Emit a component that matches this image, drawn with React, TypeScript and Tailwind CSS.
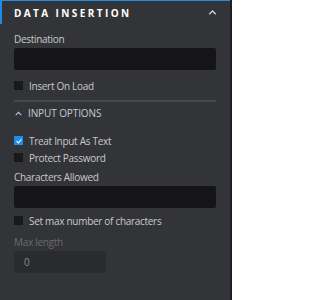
import React from "react";

function Check({ checked }: { checked?: boolean }) {
  return checked ? (
    <span className="flex h-[9px] w-[9px] shrink-0 items-center justify-center bg-[#1c8de8]">
      <svg viewBox="0 0 10 10" className="h-[8px] w-[8px]">
        <path d="M2 5.2 L4.2 7.3 L8 2.8" fill="none" stroke="white" strokeWidth="1.4" />
      </svg>
    </span>
  ) : (
    <span className="h-[9px] w-[9px] shrink-0 bg-[#19191b]" />
  );
}

function CheckRow({ label, checked }: { label: string; checked?: boolean }) {
  return (
    <div className="flex h-[17px] items-center gap-[6px]">
      <Check checked={checked} />
      <span className="text-[10px] leading-[14px] tracking-[-0.3px] text-[#c9c9c9]">{label}</span>
    </div>
  );
}

export default function App() {
  return (
    <div
      className="flex h-[300px] w-[232px] bg-[#333437]"
      style={{ fontFamily: '"Open Sans", "Noto Sans", sans-serif' }}
    >
      <div className="flex w-[230px] flex-col">
        <div className="h-px w-full bg-[#1c8de8]" />
        <div className="flex h-[23px] items-center justify-between border-l-2 border-[#1c8de8] pl-[12px] pr-[13px]">
          <span className="text-[10px] font-bold leading-[14px] tracking-[2.4px] text-white">DATA INSERTION</span>
          <svg viewBox="0 0 10 6" className="h-[5px] w-[9px]">
            <path d="M1 5 L5 1.2 L9 5" fill="none" stroke="#d0d0d0" strokeWidth="1.6" />
          </svg>
        </div>
        <div className="flex flex-col px-[14px] pt-[8px]">
          <span className="text-[10px] leading-[14px] tracking-[-0.3px] text-[#c9c9c9]">Destination</span>
          <div className="mt-[2px] h-[22px] w-full rounded-[2px] bg-[#151517]" />
          <div className="mt-[7px]">
            <CheckRow label="Insert On Load" />
          </div>
          <div className="mt-[6px] h-[2px] w-full bg-[#46474a]" />
          <div className="mt-[4px] flex h-[14px] items-center gap-[6px]">
            <svg viewBox="0 0 8 5" className="ml-[1px] h-[5px] w-[7px]">
              <path d="M0.8 4.4 L4 1.2 L7.2 4.4" fill="none" stroke="#bfc7d3" strokeWidth="1.2" />
            </svg>
            <span className="text-[10px] leading-[14px] tracking-[-0.1px] text-[#c3cbd8]">INPUT OPTIONS</span>
          </div>
          <div className="mt-[12px] flex flex-col">
            <CheckRow label="Treat Input As Text" checked />
            <CheckRow label="Protect Password" />
          </div>
          <span className="mt-[4px] text-[10px] leading-[14px] tracking-[-0.3px] text-[#c9c9c9]">Characters Allowed</span>
          <div className="mt-[2px] h-[22px] w-full rounded-[2px] bg-[#151517]" />
          <div className="mt-[4px]">
            <CheckRow label="Set max number of characters" />
          </div>
          <span className="mt-[6px] text-[10px] leading-[14px] tracking-[-0.3px] text-[#6a6a6c]">Max length</span>
          <div className="mt-[2px] flex h-[22px] w-[92px] items-center rounded-[2px] bg-[#2a2b2d] pl-[10px] text-[10px] text-[#8a8a8c]">
            0
          </div>
        </div>
      </div>
      <div className="w-[2px] bg-[#1f1f21]" />
    </div>
  );
}
